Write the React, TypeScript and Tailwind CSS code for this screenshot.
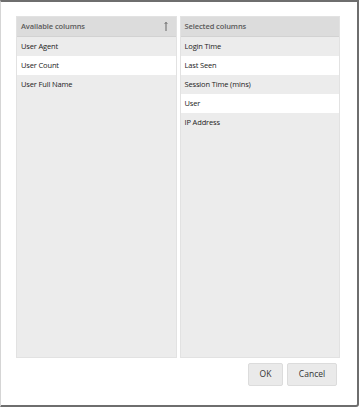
import React from "react";

const available = ["User Agent", "User Count", "User Full Name"];
const selected = ["Login Time", "Last Seen", "Session Time (mins)", "User", "IP Address"];

function ColumnList({
  title,
  items,
  highlight,
  sortIcon,
}: {
  title: string;
  items: string[];
  highlight: number[];
  sortIcon?: boolean;
}) {
  return (
    <div className="flex flex-col flex-1 bg-[#ececec] border border-[#e2e2e2]">
      <div className="flex items-center justify-between h-[20px] px-[4px] bg-[#dcdcdc] border-b border-[#d2d2d2]">
        <span className="text-[7.5px] font-semibold text-[#5a5a5a] tracking-[-0.1px]">{title}</span>
        {sortIcon && (
          <svg width="6" height="11" viewBox="0 0 6 11" className="mr-[3px]">
            <path d="M3 1.5 L3 10" stroke="#666" strokeWidth="1" />
            <path d="M1.6 3 L3 1.2 L4.4 3" stroke="#666" strokeWidth="0.8" fill="none" />
          </svg>
        )}
      </div>
      {items.map((item, i) => (
        <div
          key={item}
          className={
            "flex items-center h-[19px] px-[4px] text-[7.5px] text-[#222] tracking-[-0.15px] " +
            (highlight.includes(i) ? "bg-white" : "")
          }
        >
          {item}
        </div>
      ))}
    </div>
  );
}

export default function App() {
  return (
    <div
      className="w-[359px] h-[407px] bg-white border-t-2 border-r-2 border-b-2 border-l border-t-[#6e6e6e] border-r-[#6e6e6e] border-b-[#6e6e6e] border-l-[#d5d5d5] rounded-br-[3px] flex flex-col pt-[14px] pl-[15px] pr-[17px] pb-[19px]"
      style={{ fontFamily: '"Open Sans", "Noto Sans", sans-serif' }}
    >
      <div className="flex flex-1 gap-[3px]">
        <ColumnList title="Available columns" items={available} highlight={[1]} sortIcon />
        <ColumnList title="Selected columns" items={selected} highlight={[1, 3]} />
      </div>
      <div className="flex justify-end gap-[4px] mt-[5px] pr-[3px]">
        <button className="w-[35px] h-[23px] bg-[#eaeaea] border border-[#dcdcdc] rounded-[2px] text-[8.5px] text-[#333]">
          OK
        </button>
        <button className="w-[50px] h-[23px] bg-[#eaeaea] border border-[#dcdcdc] rounded-[2px] text-[8.5px] text-[#333]">
          Cancel
        </button>
      </div>
    </div>
  );
}
